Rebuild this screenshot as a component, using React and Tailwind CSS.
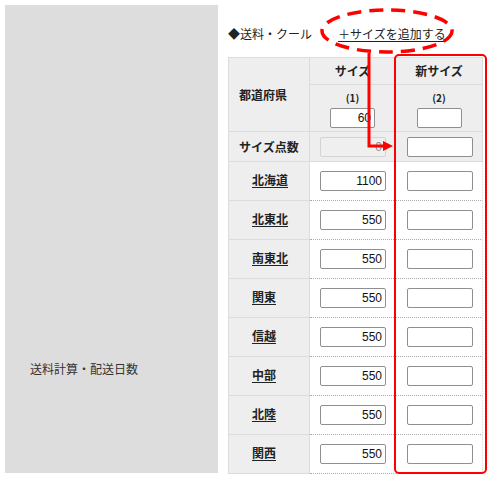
import React from 'react'

const jp = { fontFamily: '"Noto Sans CJK JP", "Noto Sans", sans-serif' }

const regions = [
  { name: '北海道', price: '1100' },
  { name: '北東北', price: '550' },
  { name: '南東北', price: '550' },
  { name: '関東', price: '550' },
  { name: '信越', price: '550' },
  { name: '中部', price: '550' },
  { name: '北陸', price: '550' },
  { name: '関西', price: '550' },
]

const Field = ({ value = '', w = 'w-[66px]', disabled = false }) => (
  <input
    readOnly
    value={value}
    disabled={disabled}
    className={`${w} h-[20px] rounded-[2px] border px-[3px] text-right text-[12px] leading-none outline-none ${
      disabled ? 'border-[#d4d4d4] bg-[#efefef] text-[#8a8a8a]' : 'border-[#8f8f8f] bg-white text-[#111]'
    }`}
    style={{ fontFamily: '"Liberation Sans", Arial, sans-serif' }}
  />
)

export default function App() {
  return (
    <div className="relative w-[496px] h-[480px] bg-white overflow-hidden text-[#222]" style={jp}>
      <div className="flex pt-[5px] pl-[5px]">
        {/* left label column */}
        <div className="w-[213px] h-[468px] bg-[#dddddd] pl-[25px] pt-[350px]">
          <span className="text-[12px] leading-[18px] text-[#333]">送料計算・配送日数</span>
        </div>

        <div className="pl-[10px]">
          {/* heading line */}
          <div className="flex items-center h-[52px] pt-[5px] text-[12px]">
            <span className="text-[#222]">◆送料・クール</span>
            <span className="ml-[26px] underline underline-offset-2 text-[#222]">＋サイズを追加する</span>
          </div>

          {/* table */}
          <div className="grid grid-cols-[81px_86px_87px] grid-rows-[27px_47px_30px_repeat(8,39px)] border-t border-l border-[#dcdcdc] text-[12px]">
            <div className="row-span-2 flex items-center pl-[10px] bg-[#eeeeee] border-r border-b border-[#dcdcdc] font-bold">
              都道府県
            </div>
            <div className="flex items-center justify-center bg-[#eeeeee] border-r border-b border-[#dcdcdc] font-bold">
              サイズ
            </div>
            <div className="flex items-center justify-center bg-[#eeeeee] border-r border-b border-[#dcdcdc] font-bold">
              新サイズ
            </div>

            <div className="flex flex-col items-center pt-[7px] gap-[4px] bg-[#eeeeee] border-r border-b border-[#dcdcdc]">
              <span className="text-[10px] leading-[12px] font-bold">(1)</span>
              <Field value="60" w="w-[45px]" />
            </div>
            <div className="flex flex-col items-center pt-[7px] gap-[4px] bg-[#eeeeee] border-r border-b border-[#dcdcdc]">
              <span className="text-[10px] leading-[12px] font-bold">(2)</span>
              <Field w="w-[45px]" />
            </div>

            <div className="flex items-center pl-[10px] bg-[#eeeeee] border-r border-b border-[#dcdcdc] font-bold">
              サイズ点数
            </div>
            <div className="flex items-center justify-center pl-[1px] bg-[#eeeeee] border-r border-b border-[#dcdcdc]">
              <Field value="0" disabled />
            </div>
            <div className="flex items-center justify-center pl-[1px] bg-[#eeeeee] border-r border-b border-[#dcdcdc]">
              <Field />
            </div>

            {regions.map((r) => (
              <React.Fragment key={r.name}>
                <div className="flex items-center pl-[23px] pb-[2px] bg-[#eeeeee] border-r border-b border-[#dcdcdc]">
                  <span className="font-bold underline underline-offset-2">{r.name}</span>
                </div>
                <div className="flex items-center justify-center pl-[1px] border-r border-b border-r-[#dcdcdc] border-b-[#aaaaaa] border-dotted">
                  <Field value={r.price} />
                </div>
                <div className="flex items-center justify-center pl-[1px] border-r border-b border-r-[#dcdcdc] border-b-[#aaaaaa] border-dotted">
                  <Field />
                </div>
              </React.Fragment>
            ))}
          </div>
        </div>
      </div>

      {/* red highlight around the new column */}
      <div className="absolute left-[394px] top-[54px] w-[93px] h-[420px] border-2 border-[#ff0000] rounded-[5px] pointer-events-none" />

      {/* dashed ellipse + arrow annotation */}
      <svg className="absolute inset-0 pointer-events-none" width="496" height="480">
        <ellipse cx="387" cy="31" rx="65" ry="21" fill="none" stroke="#ff0000" strokeWidth="3.5" strokeDasharray="14 8" />
        <polyline points="369,53 369,146 384,146" fill="none" stroke="#ff0000" strokeWidth="3" />
        <polygon points="383,141 393,146 383,151" fill="#ff0000" />
      </svg>
    </div>
  )
}
